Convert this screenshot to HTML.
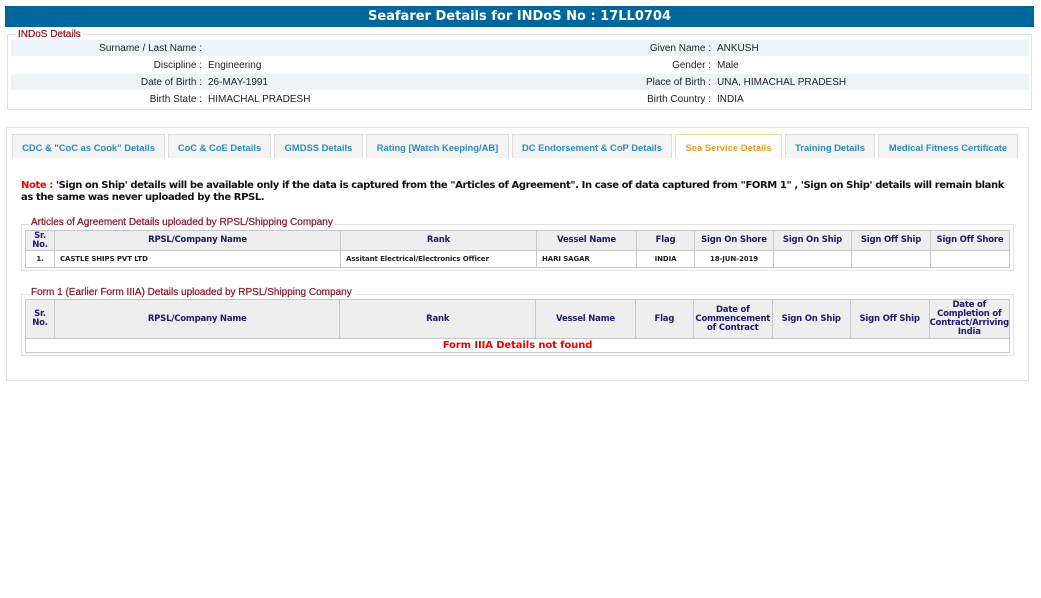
<!DOCTYPE html>
<html><head><meta charset="utf-8"><style>
*{margin:0;padding:0;box-sizing:border-box}
body{width:1041px;height:598px;background:#fff;position:relative;font-family:"Liberation Sans",Arial,sans-serif;overflow:hidden}
.a{position:absolute}
.title{left:5px;top:6px;width:1029px;height:21px;background:#00679c;color:#fff;font:bold 13px "DejaVu Sans",Verdana,sans-serif;text-align:center;line-height:22px}
.fs{border:1px solid #e2e2e2}
.leg{background:#fff;color:#8b1a2a;font-size:10px;-webkit-text-stroke:0.25px #8b1a2a;padding:0 2px;line-height:12px}
.row{left:11px;width:1018px;height:16px;font-size:10px;color:#222;line-height:17px}
.row span{position:absolute;white-space:nowrap}
.l1{right:827px}.v1{left:197px}.l2{right:318px}.v2{left:706px}
.tab{top:134px;height:24px;background:#f3f3f3;border:1px solid #ddd;border-bottom:none;color:#2b8cb9;font-weight:bold;font-size:9.4px;text-align:center;line-height:25px;white-space:nowrap}
.tab.on{background:#fff;border-color:#f5d98c;color:#e8a020}
.note{left:21px;font:bold 10px "DejaVu Sans",Verdana,sans-serif;color:#111;line-height:12px;white-space:nowrap;letter-spacing:-0.4px}
table{position:absolute;border-collapse:collapse;font-family:"DejaVu Sans",Verdana,sans-serif}
td,th{border:1px solid #c8c8c8}
th{background:#eee;color:#1a1a6e;font-size:8.5px;font-weight:bold;line-height:9px;letter-spacing:-0.2px}
td{font-size:7px;font-weight:bold;color:#222;height:17px;padding-left:5px;letter-spacing:-0.1px}
</style></head><body>
<div class="a title">Seafarer Details for INDoS No : 17LL0704</div>
<div class="a fs" style="left:7px;top:34px;width:1025px;height:76px"></div>
<div class="a leg" style="left:16px;top:29px">INDoS Details</div>
<div class="a row" style="top:40px;background:#edf3fa"><span class="l1">Surname / Last Name :</span><span class="l2">Given Name :</span><span class="v2">ANKUSH</span></div>
<div class="a row" style="top:57px"><span class="l1">Discipline :</span><span class="v1">Engineering</span><span class="l2">Gender :</span><span class="v2">Male</span></div>
<div class="a row" style="top:74px;background:#edf3fa"><span class="l1">Date of Birth :</span><span class="v1">26-MAY-1991</span><span class="l2">Place of Birth :</span><span class="v2">UNA, HIMACHAL PRADESH</span></div>
<div class="a row" style="top:91px"><span class="l1">Birth State :</span><span class="v1">HIMACHAL PRADESH</span><span class="l2">Birth Country :</span><span class="v2">INDIA</span></div>

<div class="a fs" style="left:6px;top:127px;width:1023px;height:254px"></div>
<div class="a tab" style="left:12px;width:153px">CDC &amp; "CoC as Cook" Details</div>
<div class="a tab" style="left:168px;width:103px">CoC &amp; CoE Details</div>
<div class="a tab" style="left:274px;width:89px">GMDSS Details</div>
<div class="a tab" style="left:366px;width:143px">Rating [Watch Keeping/AB]</div>
<div class="a tab" style="left:512px;width:160px">DC Endorsement &amp; CoP Details</div>
<div class="a tab on" style="left:675px;width:107px">Sea Service Details</div>
<div class="a tab" style="left:785px;width:90px">Training Details</div>
<div class="a tab" style="left:878px;width:140px">Medical Fitness Certificate</div>

<div class="a note" style="top:180px"><span style="color:#e00">Note :</span> 'Sign on Ship' details will be available only if the data is captured from the "Articles of Agreement". In case of data captured from "FORM 1" , 'Sign on Ship' details will remain blank</div>
<div class="a note" style="top:192px">as the same was never uploaded by the RPSL.</div>

<div class="a fs" style="left:21px;top:224px;width:993px;height:47px"></div>
<div class="a leg" style="left:29px;top:217px">Articles of Agreement Details uploaded by RPSL/Shipping Company</div>
<table style="left:25px;top:230px;width:985px">
<tr style="height:20px"><th style="width:29px">Sr.<br>No.</th><th style="width:286px">RPSL/Company Name</th><th style="width:196px">Rank</th><th style="width:100px">Vessel Name</th><th style="width:58px">Flag</th><th style="width:79px">Sign On Shore</th><th style="width:78px">Sign On Ship</th><th style="width:79px">Sign Off Ship</th><th>Sign Off Shore</th></tr>
<tr><td style="text-align:center;padding:0">1.</td><td>CASTLE SHIPS PVT LTD</td><td>Assitant Electrical/Electronics Officer</td><td>HARI SAGAR</td><td style="text-align:center;padding:0">INDIA</td><td style="text-align:center;padding:0">18-JUN-2019</td><td></td><td></td><td></td></tr>
</table>

<div class="a fs" style="left:21px;top:294px;width:993px;height:62px"></div>
<div class="a leg" style="left:29px;top:287px">Form 1 (Earlier Form IIIA) Details uploaded by RPSL/Shipping Company</div>
<table style="left:25px;top:299px;width:985px">
<tr style="height:39px"><th style="width:29px">Sr.<br>No.</th><th style="width:286px">RPSL/Company Name</th><th style="width:196px">Rank</th><th style="width:100px">Vessel Name</th><th style="width:58px">Flag</th><th style="width:79px">Date of<br>Commencement<br>of Contract</th><th style="width:78px">Sign On Ship</th><th style="width:79px">Sign Off Ship</th><th>Date of<br>Completion of<br>Contract/Arriving<br>India</th></tr>
<tr><td colspan="9" style="height:14px;text-align:center;color:#e00;font-size:10px;padding:0">Form IIIA Details not found</td></tr>
</table>
</body></html>
